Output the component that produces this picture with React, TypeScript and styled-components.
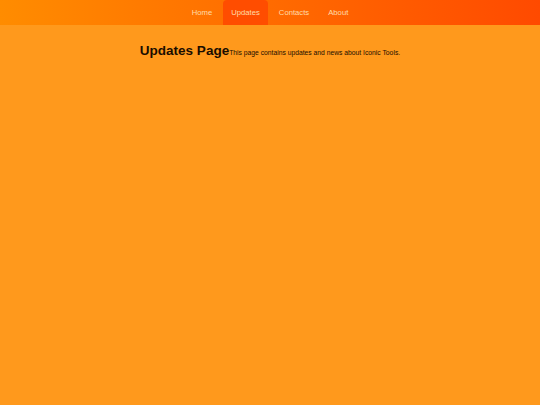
import React from "react";
import styled, { createGlobalStyle } from "styled-components";

const GlobalStyle = createGlobalStyle`
  html, body {
    margin: 0;
    padding: 0;
    background: #ff991c;
    font-family: "Liberation Sans", Arial, sans-serif;
  }
  body {
    min-height: 405px;
  }
`;

const NavBar = styled.nav`
  height: 25px;
  display: flex;
  justify-content: center;
  align-items: stretch;
  background: linear-gradient(to right, #ff8c00, #ff4a00);
`;

const NavLink = styled.a<{ $active?: boolean }>`
  display: flex;
  align-items: center;
  padding: 0 8.5px;
  margin: 0 1px;
  font-size: 7.7px;
  color: #ffdcaa;
  text-decoration: none;
  border-radius: 4px 4px 0 0;
  background: ${(p) => (p.$active ? "#ff4d00" : "transparent")};
`;

const Content = styled.main`
  display: flex;
  justify-content: center;
  align-items: baseline;
  padding-top: 18px;
`;

const Title = styled.h1`
  margin: 0;
  font-size: 13.5px;
  font-weight: bold;
  color: #1a0d00;
`;

const Text = styled.p`
  margin: 0;
  font-size: 6.75px;
  color: #1a0d00;
`;

const links = ["Home", "Updates", "Contacts", "About"];

export default function App() {
  return (
    <>
      <GlobalStyle />
      <NavBar>
        {links.map((l) => (
          <NavLink key={l} href="#" $active={l === "Updates"}>
            {l}
          </NavLink>
        ))}
      </NavBar>
      <Content>
        <Title>Updates Page</Title>
        <Text>This page contains updates and news about Iconic Tools.</Text>
      </Content>
    </>
  );
}
